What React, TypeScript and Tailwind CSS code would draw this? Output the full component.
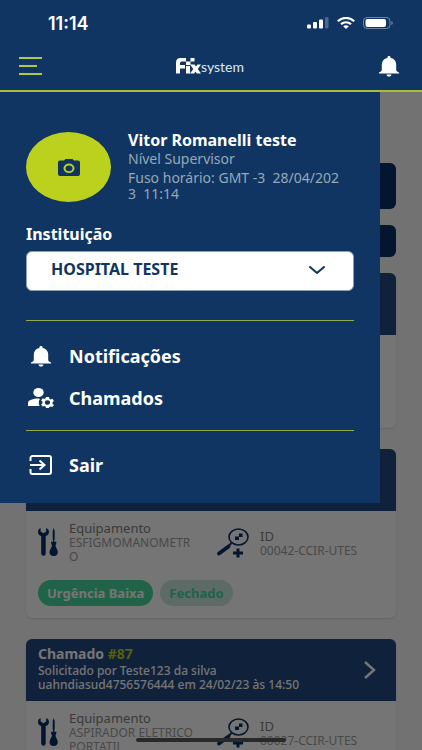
import React from "react";

const BellIcon = ({ className }: { className: string }) => (
  <svg viewBox="0 0 24 24" className={className} fill="currentColor" preserveAspectRatio="none" aria-hidden="true">
    <path d="M10.4 1.600a1.600 1.600 0 0 1 3.200 0v.8c3.600.8 5.600 3.700 5.600 7.300v6.100c0 1.500 1 2.300 2.900 3v1.200H1.900v-1.200c1.900-.7 2.900-1.500 2.900-3V9.700c0-3.600 2-6.500 5.600-7.300zM9.600 21h4.800c0 1.500-1 2.400-2.400 2.400S9.600 22.500 9.600 21z" />
  </svg>
);

const ToolsIcon = () => (
  <svg viewBox="0 0 20 28" className="h-7 w-5 shrink-0" fill="#072e68" aria-hidden="true">
    <path d="M2.600 0v3.600l2.800 1.600 2.800-1.600V0c1.800.8 2.800 2.200 2.800 3.900 0 2-1.200 3.300-3.300 4.200v17.300a2.200 2.200 0 0 1-4.500 0V8.100C1.200 7.200 0 5.900 0 3.900 0 2.200.8.800 2.600 0z" />
    <path d="M15.700 0l1 3v8l-.4 1.200v1.600h2.200c0 2-1 2.800-1 4 0 1.400 2.300 3.700 2.300 6.200 0 2.500-1.500 4-4.100 4s-4.200-1.500-4.200-4c0-2.500 2.400-4.800 2.400-6.200 0-1.200-1-2-1-4H15v-1.600L14.700 11V3z" />
  </svg>
);

const SearchPlusIcon = () => (
  <svg viewBox="0 0 34 30" className="h-[30px] w-[34px] shrink-0" fill="none" stroke="#072e68" aria-hidden="true">
    <ellipse cx="22.500" cy="9" rx="9.500" ry="8" strokeWidth="1.600" />
    <path d="M15.500 15L13 17.500" strokeWidth="2" />
    <path d="M12.500 18.500L3 25.500" strokeWidth="3.800" strokeLinecap="round" />
    <path d="M22 20.500v9M17 25h10" strokeWidth="3" />
    <path d="M19 8.500h4v3.500h-4zM23 5.500h3.500V9H23z" fill="#072e68" stroke="none" />
  </svg>
);

type TicketProps = {
  number?: string;
  author?: string;
  detail?: string;
  equipment: string;
  id: string;
};

function Ticket({ number, author, detail, equipment, id }: TicketProps) {
  return (
    <article className="overflow-hidden rounded-md bg-white shadow">
      <header className="flex h-[62px] items-start justify-between bg-[#214880] pr-5 pl-3 text-white">
        {number && (
          <>
            <div className="pt-[5px]">
              <h2 className="text-[14px] leading-5 font-bold">
                Chamado <span className="text-[#bcd01e]">#{number}</span>
              </h2>
              <p className="text-[12px] leading-[14px] font-medium">{author}</p>
              <p className="text-[12px] leading-[14px] font-medium">{detail}</p>
            </div>
            <button type="button" aria-label="Abrir chamado" className="self-center">
              <svg viewBox="0 0 12 18" className="h-[18px] w-3" fill="none" stroke="currentColor" strokeWidth="2.500" aria-hidden="true">
                <path d="M1 1l9 8-9 8" />
              </svg>
            </button>
          </>
        )}
      </header>
      <div className="flex px-3 pt-[9px]">
        <div className="flex w-[178px] gap-[11px]">
          <div className="pt-2"><ToolsIcon /></div>
          <div className="w-[128px]">
            <h3 className="text-[13px] leading-4 text-[#808080]">Equipamento</h3>
            <p className="text-[12px] leading-[14px] wrap-anywhere text-[#a0a0a0]">{equipment}</p>
          </div>
        </div>
        <div className="flex gap-[10px]">
          <div className="pt-2"><SearchPlusIcon /></div>
          <div className="pt-2">
            <h3 className="text-[13px] leading-4 text-[#808080]">ID</h3>
            <p className="text-[12px] leading-[14px] text-[#a0a0a0]">{id}</p>
          </div>
        </div>
      </div>
      <div className="flex gap-[7px] px-3 pt-4 pb-3 text-[13px] leading-[26px] font-bold">
        <span className="rounded-full bg-[#46d89f] px-[9px] text-white">Urgência Baixa</span>
        <span className="rounded-full bg-[#c8eadd] px-[9px] text-[#46d89f]">Fechado</span>
      </div>
    </article>
  );
}

function TicketList() {
  return (
    <main className="flex flex-col bg-[#f9f9f9] px-[26px] pt-[71px]">
      <button type="button" aria-label="Filtrar" className="h-[46px] rounded-md bg-[#072e68]" />
      <button type="button" aria-label="Novo chamado" className="mt-4 h-8 rounded-md bg-[#072e68]" />
      <section className="mt-4 h-[155px] overflow-hidden rounded-md bg-white shadow">
        <div className="h-[62px] bg-[#214880]" />
      </section>
      <div className="mt-[21px] flex flex-col gap-[21px]">
        <Ticket equipment="ESFIGMOMANOMETRO" id="00042-CCIR-UTES" />
        <Ticket number="87" author="Solicitado por Teste123 da silva" detail="uahndiasud4756576444 em 24/02/23 às 14:50" equipment="ASPIRADOR ELETRICO PORTATIL" id="00027-CCIR-UTES" />
      </div>
    </main>
  );
}

function Drawer() {
  const item = "flex h-[42px] items-center gap-[14px] text-left text-[18px] font-bold";
  return (
    <aside className="absolute top-0 left-0 w-[90%] bg-[#103562] px-[26px] pt-10 pb-[17px] text-white">
      <div className="flex gap-[17px]">
        <button type="button" aria-label="Alterar foto" className="flex h-[70px] w-[85px] shrink-0 items-center justify-center rounded-[50%] bg-[#bcd01e] text-[#103562]">
          <svg viewBox="0 0 22 17" className="h-[17px] w-[22px]" aria-hidden="true">
            <path fill="currentColor" fillRule="evenodd" d="M7.500 0h7l1.500 1.500H20a2 2 0 0 1 2 2V15a2 2 0 0 1-2 2H2a2 2 0 0 1-2-2V3.500a2 2 0 0 1 2-2h4zM11 4.500a5.500 4.800 0 1 0 0 9.600 5.500 4.800 0 1 0 0-9.600zm0 1.900a3.500 2.900 0 1 1 0 5.800 3.500 2.900 0 1 1 0-5.800z" />
          </svg>
        </button>
        <div className="min-w-0 flex-1 pr-2 text-[14px] leading-4 text-[#94a9b9]">
          <h1 className="pb-[3px] text-[16px] leading-4 font-bold text-white">Vitor Romanelli teste</h1>
          <p className="pb-[3px]">Nível Supervisor</p>
          <p className="break-all whitespace-pre-wrap">{"Fuso horário: GMT -3  28/04/2023  11:14"}</p>
        </div>
      </div>
      <label htmlFor="institution" className="mt-5 block text-[16px] leading-6 font-bold">Instituição</label>
      <div className="relative mt-[5px]">
        <select id="institution" className="block h-10 w-full appearance-none rounded-md border border-[#8ba3b8] bg-white pr-12 pb-1 pl-6 text-[16px] font-bold text-[#103562]">
          <option>HOSPITAL TESTE</option>
        </select>
        <svg viewBox="0 0 16 8" className="pointer-events-none absolute top-[15px] right-[29px] h-2 w-4" fill="none" stroke="#103562" strokeWidth="2" strokeLinecap="round" strokeLinejoin="round" aria-hidden="true">
          <path d="M1 1l7 6 7-6" />
        </svg>
      </div>
      <nav className="mt-[29px] flex flex-col">
        <div className="flex flex-col border-y border-[#8eaa49] pt-[14px] pb-[11px]">
          <button type="button" className={item}>
            <BellIcon className="mr-[2px] ml-[3px] h-[21px] w-6" />
            Notificações
          </button>
          <button type="button" className={item}>
            <svg viewBox="0 0 29 20" className="h-5 w-[29px]" fill="currentColor" aria-hidden="true">
              <ellipse cx="12.500" cy="4.500" rx="5.200" ry="4.500" />
              <path d="M14 11c-1.500 2-1.600 4.500-.4 7H2v-3c0-2.800 5-4.500 10.500-4.500z" />
              <path fillRule="evenodd" d="M20 9h3l.4 1.800 1.200.6 1.800-.6 1.500 2.300-1.400 1.200v1.400l1.400 1.200-1.500 2.200-1.800-.6-1.200.6L23 20h-3l-.4-1.400-1.200-.6-1.800.6-1.500-2.200 1.400-1.200v-1.400l-1.400-1.200 1.500-2.300 1.800.6 1.200-.6zm1.500 3.200a2.600 2.300 0 1 0 0 4.600 2.600 2.300 0 1 0 0-4.600z" />
            </svg>
            Chamados
          </button>
        </div>
        <button type="button" className={item + " mt-[13px]"}>
          <svg viewBox="0 0 24 20" className="mr-[3px] ml-[2px] h-5 w-6" fill="none" stroke="currentColor" strokeWidth="2" aria-hidden="true">
            <path d="M2.500 6V3a2 2 0 0 1 2-2H21a2 2 0 0 1 2 2v14a2 2 0 0 1-2 2H4.500a2 2 0 0 1-2-2v-3M2 10h14M11.500 5.500l5 4.500-5 4.500" />
          </svg>
          Sair
        </button>
      </nav>
    </aside>
  );
}

function TopBar() {
  return (
    <header className="shrink-0 border-b-2 border-[#a9bd38] bg-[#103562] text-white">
      <div className="flex h-[46px] items-center justify-between pr-[29px] pl-12">
        <time className="font-['Inter','Liberation_Sans',sans-serif] text-[18px] font-semibold">11:14</time>
        <div className="flex items-center gap-2">
          <svg viewBox="0 0 22 12" className="h-3 w-[22px]" fill="currentColor" aria-hidden="true">
            <rect x="0" y="7.500" width="4" height="4" rx="1" />
            <rect x="6" y="5" width="4" height="6.500" rx="1" />
            <rect x="12" y="2.500" width="4" height="9" rx="1" />
            <rect x="18" y="0" width="3.500" height="11.500" rx="1" opacity=".25" />
          </svg>
          <svg viewBox="0 0 18 12" className="h-3 w-[18px]" fill="none" stroke="currentColor" strokeWidth="2.200" aria-hidden="true">
            <path d="M.8 4.200C5.500-.2 12.500-.2 17.200 4.200M4 7.200c3-2.600 7-2.600 10 0" />
            <path d="M6.200 9.300c1.700-1.400 3.900-1.400 5.600 0L9 12z" fill="currentColor" stroke="none" />
          </svg>
          <svg viewBox="0 0 30 12" className="h-3 w-[30px]" aria-hidden="true">
            <rect x=".5" y=".5" width="26.500" height="11" rx="3.500" fill="none" stroke="#fff" strokeOpacity=".4" />
            <rect x="2.500" y="2" width="20.500" height="8" rx="2" fill="#fff" />
            <path d="M28.500 4v4c1.500-.5 1.500-3.500 0-4z" fill="#fff" fillOpacity=".5" />
          </svg>
        </div>
      </div>
      <div className="grid h-11 grid-cols-3 items-center pr-[21px] pb-1 pl-[19px]">
        <button type="button" aria-label="Menu" className="text-[#b0c93c]">
          <svg viewBox="0 0 23 18" className="h-[18px] w-[23px]" stroke="currentColor" strokeWidth="2" aria-hidden="true">
            <path d="M0 1h23M0 9h18M0 17h23" />
          </svg>
        </button>
        <div className="flex items-end justify-center" role="img" aria-label="Fixsystem">
          <svg viewBox="0 0 25 16" className="h-4 w-[25px]" fill="currentColor" aria-hidden="true">
            <path d="M0 15.500V4.500Q0 0 4.500 0H10v3.500H5.500Q4 3.500 4 5v2h5v3.500H4v5z" />
            <path d="M10 3.500h4.500V7H10zM14.500 0h4v3.500h-4zM10 8h4v7.500h-4z" />
            <path d="M14 6.500h4.500l1.500 2 1.500-2H25l-3.200 4.500 3.200 4.500h-4.200l-1.300-2-1.300 2H14l3.300-4.500z" />
          </svg>
          <span className="font-['Lato','Liberation_Sans',sans-serif] text-[14px] leading-[14px] text-[#dfe7ef]">system</span>
        </div>
        <button type="button" aria-label="Notificações" className="justify-self-end">
          <BellIcon className="h-[21px] w-6" />
        </button>
      </div>
    </header>
  );
}

export default function App() {
  return (
    <div className="relative flex h-screen flex-col overflow-hidden bg-[#f9f9f9] font-['Noto_Sans','Open_Sans',sans-serif]">
      <TopBar />
      <div className="relative min-h-0 flex-1 overflow-hidden">
        <TicketList />
        <div className="absolute inset-0 bg-black/54" />
        <Drawer />
      </div>
      <div className="absolute bottom-[8px] left-1/2 h-1 w-[150px] -translate-x-1/2 rounded-full bg-[#292929]" />
    </div>
  );
}
